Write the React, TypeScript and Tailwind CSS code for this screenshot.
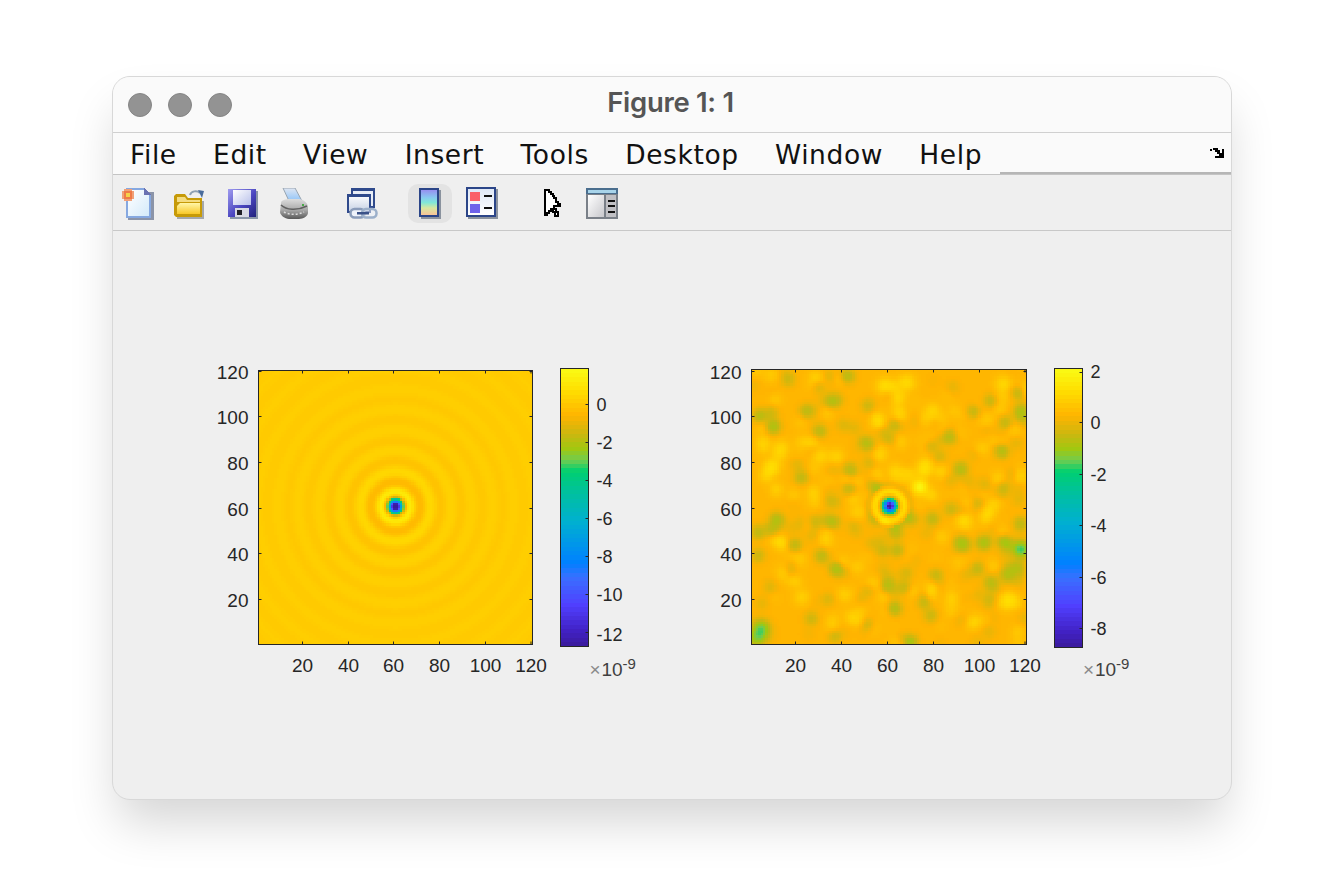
import { useMemo } from 'react'

// colormap read off the colorbar, top (0) to bottom (1)
const STOPS: [number, number[]][] = [
  [0, [249, 251, 21]],
  [0.08, [255, 222, 0]],
  [0.17, [255, 180, 0]],
  [0.24, [200, 184, 16]],
  [0.29, [160, 200, 16]],
  [0.33, [112, 204, 80]],
  [0.37, [0, 208, 112]],
  [0.45, [0, 192, 160]],
  [0.55, [0, 176, 208]],
  [0.7, [0, 128, 255]],
  [0.75, [56, 112, 255]],
  [0.85, [80, 64, 255]],
  [0.95, [64, 32, 192]],
  [1, [58, 26, 154]],
]
const BAR_LEVELS = 64
const IMAGE_LEVELS = 256

function colorAt(f: number) {
  for (let i = 1; i < STOPS.length; i++) {
    const [f1, c1] = STOPS[i]
    const [f0, c0] = STOPS[i - 1]
    if (f <= f1) {
      const t = (f - f0) / (f1 - f0)
      const c = c0.map((v, k) => Math.round(v + (c1[k] - v) * t))
      return `rgb(${c[0]},${c[1]},${c[2]})`
    }
  }
  return 'rgb(58,26,154)'
}

const barColors = Array.from({ length: BAR_LEVELS }, (_, i) => colorAt((i + 0.5) / BAR_LEVELS))
const imageColors = Array.from({ length: IMAGE_LEVELS }, (_, i) => colorAt((i + 0.5) / IMAGE_LEVELS))

// blobs picked from the noisy plot, in zoomed pixels (6.9 per cell)
const GREEN = [
  [65, 172, 1.5], [25, 140, 1.1], [165, 125, 0.9], [205, 185, 1], [245, 95, 0.8], [290, 20, 1], [200, 50, 0.8], [110, 30, 0.7],
  [350, 225, 0.9], [150, 325, 0.9], [295, 360, 0.9], [370, 350, 0.9], [75, 450, 1], [20, 490, 0.9], [130, 530, 1], [245, 460, 1.1],
  [190, 460, 0.7], [255, 600, 1.5], [210, 560, 0.9], [410, 650, 1.1], [460, 655, 0.8], [430, 720, 1.4], [350, 770, 0.8], [250, 800, 0.9],
  [180, 750, 0.7], [435, 490, 1], [440, 545, 1], [395, 545, 0.7], [480, 450, 0.9],
  [545, 450, 0.9], [555, 620, 0.8], [600, 205, 0.8], [630, 300, 1.2], [670, 125, 1], [720, 95, 0.8], [765, 160, 0.9], [755, 245, 1.4],
  [805, 70, 1], [812, 125, 1.1], [810, 465, 1], [760, 515, 1], [700, 520, 1.1], [630, 520, 1],
  [770, 620, 1], [680, 600, 0.9], [720, 640, 0.9], [520, 700, 0.9], [540, 740, 0.8], [430, 170, 0.8], [350, 110, 0.7], [295, 300, 0.8],
  [640, 530, 0.9], [20, 560, 0.7], [600, 420, 0.7], [800, 600, 1], [60, 130, 0.6],
]
const YELLOW = [
  [60, 295, 1.2], [400, 50, 1.1], [470, 40, 0.9], [440, 85, 0.9], [760, 45, 1.1], [520, 300, 0.9], [255, 265, 0.9],
  [205, 260, 0.8], [90, 235, 0.7], [100, 610, 0.7], [150, 685, 0.7], [365, 650, 0.8], [545, 660, 0.9], [600, 690, 0.8], [765, 700, 1],
  [640, 455, 1], [810, 320, 0.8], [545, 125, 0.8], [380, 150, 0.5], [705, 155, 0.6], [790, 180, 0.5], [320, 430, 0.6], [225, 505, 0.6],
  [640, 590, 0.6], [60, 15, 0.6], [250, 760, 0.7], [430, 310, 0.9], [470, 315, 0.8], [380, 320, 0.6],
]
// spots that stand out of the noise
const STRONG = [
  [505, 355, 1.2, 2.4], [812, 542, -1.9, 2.8], [780, 548, -0.8, 3], [30, 790, -1.3, 3], [12, 812, -1, 3], [480, 820, -1.2, 2.2], [400, 460, 0.5, 2],
]

function seeded(seed: number) {
  let s = seed
  return () => {
    s = (s + 0x6d2b79f5) | 0
    let t = Math.imul(s ^ (s >>> 15), 1 | s)
    t = (t + Math.imul(t ^ (t >>> 7), 61 | t)) ^ t
    return ((t ^ (t >>> 14)) >>> 0) / 4294967296
  }
}

function buildNoise() {
  const rnd = seeded(41)
  const blobs: number[][] = []
  GREEN.forEach(([x, y, a]) => blobs.push([x / 6.9, y / 6.9, -a * 1.1, 2.2]))
  YELLOW.forEach(([x, y, a]) => blobs.push([x / 6.9, y / 6.9, a * 0.85, 2.5]))
  for (let i = 0; i < 320; i++) {
    blobs.push([rnd() * 120, rnd() * 120, (rnd() - 0.5) * 1.1, 2.2])
  }
  return blobs
}

function ringsValue(col: number, row: number) {
  const r = Math.hypot(col + 0.5 - 60, row + 0.5 - 59.5)
  const amp = r < 6.5 ? 1.1 : 1.1 * Math.pow(6.5 / r, 1.25)
  return 0.15 + amp * Math.cos((2 * Math.PI * (r - 6.5)) / 9) - 13.8 * Math.exp(-Math.pow(r / 2.7, 2))
}

function makeNoisyValue() {
  const blobs = buildNoise()
  return (col: number, row: number) => {
    const x = col + 0.5
    const y = row + 0.5
    const r = Math.hypot(x - 60.3, y - 59.6)
    let n = 0
    for (const [bx, by, a, s] of blobs) {
      const dx = x - bx
      const dy = y - by
      const d = dx * dx + dy * dy
      if (d < 90) n += a * Math.exp(-d / (2 * s * s))
    }
    // squeeze so overlapping blobs stay in the yellow-green band
    let v = 0.3 + 1.35 * Math.tanh(n / 1.35) * (r < 9 ? 0.3 : 1)
    for (const [bx, by, a, s] of STRONG) {
      const dx = x - bx / 6.9
      const dy = y - by / 6.9
      v += a * Math.exp(-(dx * dx + dy * dy) / (2 * s * s))
    }
    v -= 9.7 * Math.exp(-Math.pow(r / 2.7, 2))
    if (r > 3) v += 0.9 * Math.exp(-Math.pow((r - 6.3) / 1.6, 2))
    if (r > 8) v -= 0.35 * Math.exp(-Math.pow((r - 9.5) / 1.4, 2))
    return v
  }
}

type Box = { x0: number; x1: number; y0: number; y1: number }

type PlotProps = {
  value: (col: number, row: number) => number
  vTop: number
  vBottom: number
  frame: Box
  bar: Box
  xTicks: number[]
  yTicks: number[]
  barTicks: { label: string; y: number; tick: number }[]
  expX: number
  expY: number
}

function Plot({ value, vTop, vBottom, frame, bar, xTicks, yTicks, barTicks, expX, expY }: PlotProps) {
  // one path per colour level keeps the node count down
  const paths = useMemo(() => {
    const d: string[] = Array.from({ length: IMAGE_LEVELS }, () => '')
    for (let row = 0; row < 120; row++) {
      for (let col = 0; col < 120; col++) {
        const f = (vTop - value(col, row)) / (vTop - vBottom)
        const level = Math.max(0, Math.min(IMAGE_LEVELS - 1, Math.floor(f * IMAGE_LEVELS)))
        d[level] += `M${col} ${row}h1v1h-1z`
      }
    }
    return d
  }, [value, vTop, vBottom])

  const xLabels = [20, 40, 60, 80, 100, 120]
  const yLabels = [120, 100, 80, 60, 40, 20]
  const barH = bar.y1 - bar.y0

  return (
    <svg width="440" height="330" className="shrink-0 font-['Liberation_Sans',Arial,sans-serif]">
      <svg x={frame.x0} y={frame.y0} width={frame.x1 - frame.x0} height={frame.y1 - frame.y0} viewBox="0 0 120 120" preserveAspectRatio="none" shapeRendering="crispEdges">
        {paths.map((p, i) => (p ? <path key={i} d={p} fill={imageColors[i]} /> : null))}
      </svg>
      <rect x={frame.x0} y={frame.y0} width={frame.x1 - frame.x0} height={frame.y1 - frame.y0} fill="none" stroke="#262626" />
      {xTicks.map((x) => (
        <g key={x} stroke="#262626">
          <line x1={x} x2={x} y1={frame.y0} y2={frame.y0 + 3} />
          <line x1={x} x2={x} y1={frame.y1} y2={frame.y1 - 3} />
        </g>
      ))}
      {yTicks.map((y) => (
        <g key={y} stroke="#262626">
          <line x1={frame.x0} x2={frame.x0 + 3} y1={y} y2={y} />
          <line x1={frame.x1} x2={frame.x1 - 3} y1={y} y2={y} />
        </g>
      ))}
      {xLabels.map((l, i) => (
        <text key={l} x={xTicks[i]} y={frame.y1 + 27.5} textAnchor="middle" className="fill-[#262626] text-[19px]">
          {l}
        </text>
      ))}
      {yLabels.map((l, i) => (
        <text key={l} x={frame.x0 - 10} y={yTicks[i] + 7} textAnchor="end" className="fill-[#262626] text-[19px]">
          {l}
        </text>
      ))}
      <g shapeRendering="crispEdges">
        {barColors.map((c, i) => (
          <rect key={i} x={bar.x0} y={bar.y0 + (i * barH) / BAR_LEVELS} width={bar.x1 - bar.x0} height={barH / BAR_LEVELS + 0.5} fill={c} />
        ))}
      </g>
      <rect x={bar.x0} y={bar.y0} width={bar.x1 - bar.x0} height={barH} fill="none" stroke="#262626" />
      {barTicks.map((t) => (
        <g key={t.label}>
          <line x1={bar.x1} x2={bar.x1 - 3} y1={t.tick} y2={t.tick} stroke="#262626" />
          <text x={bar.x1 + 8} y={t.y + 7} className="fill-[#262626] text-[18px]">
            {t.label}
          </text>
        </g>
      ))}
      <text x={expX} y={expY} className="fill-[#8a8a8a] text-[19px]">×</text>
      <text x={expX + 12} y={expY} className="fill-[#404040] text-[19px]">10</text>
      <text x={expX + 33} y={expY - 7} className="fill-[#404040] text-[15px]">-9</text>
    </svg>
  )
}

function NewIcon() {
  return (
    <svg width="32" height="32" viewBox="0 0 32 32" shapeRendering="crispEdges">
      <defs>
        <linearGradient id="pg" x1="0" y1="0" x2="1" y2="1">
          <stop offset="0" stopColor="#ffffff" />
          <stop offset="1" stopColor="#d4eafa" />
        </linearGradient>
      </defs>
      <path d="M6 4h26v28H6z" fill="#8b94a8" />
      <path d="M4 0h18l7 7v23H4z" fill="#86a8e0" />
      <path d="M6 2h15l6 6v20H6z" fill="url(#pg)" />
      <path d="M22 0l7 7h-7z" fill="#6a72b2" />
      <path d="M2 1h8v2H2zM2 11h8v2H2zM0 3h2v8H0zM10 3h2v8h-2z" fill="#f0a078" />
      <path d="M2 3h8v8H2z" fill="#ee7a48" />
      <path d="M4 5h4v4H4z" fill="#f4d24a" />
    </svg>
  )
}

function OpenIcon() {
  return (
    <svg width="30" height="30" viewBox="0 0 30 30">
      <defs>
        <linearGradient id="fg" x1="0" y1="0" x2="0" y2="1">
          <stop offset="0" stopColor="#fff6a8" />
          <stop offset="1" stopColor="#f8c828" />
        </linearGradient>
      </defs>
      <path d="M16 6c1-4 7-5 10-2" fill="none" stroke="#8ea0b4" strokeWidth="2" />
      <path d="M24 1l6 1-2 7z" fill="#4a6c9c" />
      <path d="M3 12h27v18H3z" fill="#a4a8ac" />
      <path d="M0 7l2-2h9l3 4h14v19H2l-2-2z" fill="#c69a08" />
      <path d="M3 8h8l2 3h13v2H3z" fill="#f4dc80" />
      <path d="M6 14h20v11H3v-8z" fill="url(#fg)" />
    </svg>
  )
}

function SaveIcon() {
  return (
    <svg width="30" height="30" viewBox="0 0 30 30" shapeRendering="crispEdges">
      <defs>
        <linearGradient id="sg" x1="0" y1="0" x2="1" y2="1">
          <stop offset="0" stopColor="#a09cf0" />
          <stop offset="0.55" stopColor="#4a46c0" />
          <stop offset="1" stopColor="#22227c" />
        </linearGradient>
        <linearGradient id="sl" x1="0" y1="0" x2="1" y2="1">
          <stop offset="0" stopColor="#ffffff" />
          <stop offset="1" stopColor="#b8c0ea" />
        </linearGradient>
      </defs>
      <path d="M2 2h28v28H2z" fill="#8a96a8" />
      <path d="M0 0h28v28H0z" fill="url(#sg)" />
      <path d="M5 1h18v15H5z" fill="url(#sl)" />
      <path d="M7 19h14v9H7z" fill="#d8dae4" />
      <path d="M9 21h5v5H9z" fill="#202028" />
    </svg>
  )
}

function PrintIcon() {
  return (
    <svg width="28" height="31" viewBox="0 0 28 31">
      <defs>
        <linearGradient id="pb" x1="0" y1="0" x2="0" y2="1">
          <stop offset="0" stopColor="#dcdcdc" />
          <stop offset="0.55" stopColor="#a8a8a8" />
          <stop offset="1" stopColor="#585858" />
        </linearGradient>
        <linearGradient id="pp" x1="0" y1="0" x2="0" y2="1">
          <stop offset="0" stopColor="#dfe6f2" />
          <stop offset="1" stopColor="#90c4f8" />
        </linearGradient>
      </defs>
      <path d="M3 0h12l7 13H9z" fill="url(#pp)" stroke="#98a4b0" />
      <path d="M1 15c0-3 5-4 8-4h10c4 0 9 4 9 8v6c0 3-5 6-9 6H9c-4 0-9-4-9-7z" fill="url(#pb)" />
      <path d="M1 17c5 5 16 6 26 1" fill="none" stroke="#606060" strokeWidth="1.5" />
      <path d="M4 24c5 3 14 3 20 0" fill="none" stroke="#dcdcdc" strokeWidth="1.5" strokeDasharray="2 2" />
      <rect x="22" y="16" width="2" height="2" fill="#48a848" />
    </svg>
  )
}

function LinkIcon() {
  return (
    <svg width="31" height="31" viewBox="0 0 31 31">
      <defs>
        <linearGradient id="lw" x1="0" y1="0" x2="0" y2="1">
          <stop offset="0" stopColor="#ffffff" />
          <stop offset="1" stopColor="#c4d0e4" />
        </linearGradient>
      </defs>
      <rect x="5" y="1" width="22" height="18" fill="#e8edf6" stroke="#2f4a8c" strokeWidth="2" />
      <rect x="4" y="0" width="24" height="3" fill="#2f4a8c" />
      <rect x="1" y="7" width="22" height="17" fill="url(#lw)" stroke="#2f4a8c" strokeWidth="2" />
      <rect x="0" y="6" width="24" height="3" fill="#2f4a8c" />
      <rect x="3.500" y="21" width="14" height="8.500" rx="4" fill="#eef2fa" stroke="#8a9cba" strokeWidth="2.500" />
      <rect x="15" y="21" width="14.500" height="8.500" rx="4" fill="#eef2fa" fillOpacity="0.5" stroke="#9cb0ca" strokeWidth="2.500" />
      <rect x="10" y="24" width="12" height="2.500" fill="#3a5288" />
    </svg>
  )
}

function ColorbarIcon() {
  return (
    <svg width="22" height="31" viewBox="0 0 22 31" shapeRendering="crispEdges">
      <defs>
        <linearGradient id="cb" x1="0" y1="0" x2="0" y2="1">
          <stop offset="0" stopColor="#9690f0" />
          <stop offset="0.3" stopColor="#88c8f0" />
          <stop offset="0.5" stopColor="#80e8d8" />
          <stop offset="0.72" stopColor="#d8e8a0" />
          <stop offset="1" stopColor="#f8c498" />
        </linearGradient>
      </defs>
      <path d="M2 2h20v29H2z" fill="#8a929e" />
      <path d="M0 0h20v29H0z" fill="#2b4588" />
      <path d="M2 2h16v25H2z" fill="url(#cb)" />
    </svg>
  )
}

function LegendIcon() {
  return (
    <svg width="32" height="32" viewBox="0 0 32 32" shapeRendering="crispEdges">
      <defs>
        <linearGradient id="lg" x1="0" y1="0" x2="0" y2="1">
          <stop offset="0" stopColor="#dfe8f6" />
          <stop offset="1" stopColor="#ffffff" />
        </linearGradient>
      </defs>
      <path d="M2 2h30v30H2z" fill="#8a929e" />
      <path d="M0 0h30v30H0z" fill="#2b4588" />
      <path d="M2 2h26v26H2z" fill="url(#lg)" />
      <path d="M4 5h10v9H4z" fill="#fa6068" />
      <path d="M4 17h10v9H4z" fill="#6e62ea" />
      <path d="M18 8h8v2h-8zM18 20h8v2h-8z" fill="#101010" />
    </svg>
  )
}

function CursorIcon() {
  return (
    <svg width="18" height="30" viewBox="0 0 18 30" shapeRendering="crispEdges">
      <path d="M1 1v25h2v-2h2v-2h2v-2h2v3h2v4h3v-4h-2v-3h-2v-3h6v-2h-2v-2h-2V9h-2V7H9V5H7V3H5V1z" fill="#ffffff" stroke="#000000" strokeWidth="1.500" />
    </svg>
  )
}

function BrowserIcon() {
  return (
    <svg width="32" height="31" viewBox="0 0 32 31" shapeRendering="crispEdges">
      <defs>
        <linearGradient id="bw" x1="0" y1="0" x2="1" y2="1">
          <stop offset="0" stopColor="#ffffff" />
          <stop offset="1" stopColor="#c8c8cc" />
        </linearGradient>
      </defs>
      <path d="M0 0h32v31H0z" fill="#7a8088" />
      <path d="M0 0h32v6H0z" fill="#4a6e8e" />
      <path d="M2 2h28v3H2z" fill="#a8d4ea" />
      <path d="M2 7h16v22H2z" fill="url(#bw)" />
      <path d="M20 7h10v22H20z" fill="#c0c0c4" />
      <path d="M22 12h7v2h-7zM22 17h7v2h-7zM22 23h7v2h-7z" fill="#101010" />
    </svg>
  )
}

const MENU = ['File', 'Edit', 'View', 'Insert', 'Tools', 'Desktop', 'Window', 'Help']

const ringsFrame = { x0: 58.5, x1: 332.5, y0: 15.5, y1: 289.5 }
const noisyFrame = { x0: 51.5, x1: 326.5, y0: 14.5, y1: 289.5 }
const noisyValue = makeNoisyValue()

export default function App() {
  return (
    <div className="h-[889px] w-[1344px] overflow-hidden bg-white pl-[112px] pt-[76px]">
      <div className="flex h-[724px] w-[1120px] flex-col overflow-hidden rounded-[18px] border border-[#d8d8d8] bg-[#efefef] shadow-[0_28px_48px_-6px_rgba(0,0,0,0.17)]">
        <div className="relative flex h-[56px] shrink-0 items-center gap-[16px] border-b border-[#d0d0d0] bg-[#fafafa] pl-[15px]">
          <span className="h-[24px] w-[24px] rounded-full border border-[#858585] bg-[#939393]" />
          <span className="h-[24px] w-[24px] rounded-full border border-[#858585] bg-[#939393]" />
          <span className="h-[24px] w-[24px] rounded-full border border-[#858585] bg-[#939393]" />
          <span className="absolute inset-x-0 top-[10px] pr-[3px] text-center font-['Inter',sans-serif] text-[27.5px] leading-[30px] font-semibold tracking-[-0.3px] text-[#555555]">
            Figure 1: 1
          </span>
        </div>

        <div className="flex h-[42px] shrink-0 border-b border-[#c4c4c4] bg-[#fafafa] pl-[17px] font-['DejaVu_Sans',sans-serif] text-[26.5px] leading-[43px] tracking-[0.6px] text-[#111111]">
          <div className="flex gap-[36.3px]">
            {MENU.map((m) => (
              <span key={m}>{m}</span>
            ))}
          </div>
          <div className="ml-[18px] flex flex-1 justify-end border-b-2 border-[#b6b6b6] pr-[7px] pt-[15px]">
            <svg width="14" height="10" viewBox="0 0 14 10" shapeRendering="crispEdges">
              <path d="M0 1h2v2H0zM3 0h5v2h2v3h2V1h2v9H5V8h4V6H7V4H5V2H3z" fill="#000000" />
            </svg>
          </div>
        </div>

        <div className="flex h-[56px] shrink-0 items-center border-b border-[#c8c8c8] pl-[9px] pt-[1px]">
          <div className="mt-[1px]"><NewIcon /></div>
          <div className="ml-[20px] mt-[2px]"><OpenIcon /></div>
          <div className="ml-[24px] mt-[2px]"><SaveIcon /></div>
          <div className="ml-[22px]"><PrintIcon /></div>
          <div className="ml-[39px]"><LinkIcon /></div>
          <div className="ml-[30px] flex h-[39px] w-[44px] items-center justify-center rounded-[10px] bg-[#e3e3e3]">
            <ColorbarIcon />
          </div>
          <div className="ml-[14px]"><LegendIcon /></div>
          <div className="ml-[46px] mt-[2px]"><CursorIcon /></div>
          <div className="ml-[24px]"><BrowserIcon /></div>
        </div>

        <div className="flex gap-[60px] pl-[87px] pt-[124px]">
          <Plot
            value={ringsValue}
            vTop={1.9}
            vBottom={-12.7}
            frame={ringsFrame}
            bar={{ x0: 360.5, x1: 388.5, y0: 13.5, y1: 291.5 }}
            xTicks={[102.5, 148.5, 193.5, 239.5, 285.5, 331]}
            yTicks={[16.5, 61.5, 107.5, 153.5, 198.5, 244.5]}
            barTicks={[
              { label: '0', y: 49, tick: 49.5 },
              { label: '-2', y: 87, tick: 87.5 },
              { label: '-4', y: 125, tick: 125.5 },
              { label: '-6', y: 163, tick: 163.5 },
              { label: '-8', y: 201, tick: 201.5 },
              { label: '-10', y: 239, tick: 239.5 },
              { label: '-12', y: 279, tick: 277.5 },
            ]}
            expX={389.5}
            expY={321}
          />
          <Plot
            value={noisyValue}
            vTop={2.1}
            vBottom={-8.75}
            frame={noisyFrame}
            bar={{ x0: 354.5, x1: 382.5, y0: 13.5, y1: 292.5 }}
            xTicks={[95.5, 141.5, 187.5, 233.5, 279.5, 325]}
            yTicks={[16.5, 61.5, 107.5, 153.5, 198.5, 244.5]}
            barTicks={[
              { label: '2', y: 16, tick: 17.5 },
              { label: '0', y: 67, tick: 67.5 },
              { label: '-2', y: 119, tick: 119.5 },
              { label: '-4', y: 170, tick: 170.5 },
              { label: '-6', y: 222, tick: 222.5 },
              { label: '-8', y: 273, tick: 273.5 },
            ]}
            expX={383}
            expY={321}
          />
        </div>
      </div>
    </div>
  )
}
